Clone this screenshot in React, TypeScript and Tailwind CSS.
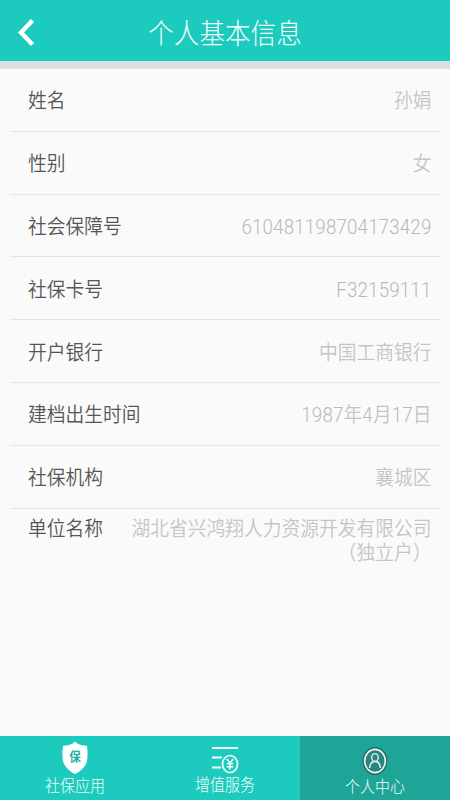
import { ReactNode } from "react";
import { clsx } from "clsx";

interface InfoRow {
  label: string;
  value: string;
}

const ROWS: InfoRow[] = [
  { label: "姓名", value: "孙娟" },
  { label: "性别", value: "女" },
  { label: "社会保障号", value: "610481198704173429" },
  { label: "社保卡号", value: "F32159111" },
  { label: "开户银行", value: "中国工商银行" },
  { label: "建档出生时间", value: "1987年4月17日" },
  { label: "社保机构", value: "襄城区" },
];

function ShieldIcon() {
  return (
    <svg width="26" height="34" viewBox="0 0 26 34" className="block">
      <path
        d="M13 .5C10.500 3.500 6 4.800 1.200 4.800C.2 9 .2 15 1 20C2.200 25.500 7 30 13 33C19 30 23.800 25.500 25 20C25.800 15 25.800 9 24.800 4.800C20 4.800 15.500 3.500 13 .5Z"
        fill="#fff"
      />
      <text
        x="13"
        y="17.800"
        transform="scale(1 1.1)"
        textAnchor="middle"
        fontSize="11.500"
        fontWeight="700"
        fill="#1cae9f"
      >
        保
      </text>
    </svg>
  );
}

function ServiceIcon() {
  return (
    <svg width="28" height="28" viewBox="0 0 28 28" fill="none" stroke="#f2fffd" className="block">
      <path d="M1 2H27" strokeWidth="2" />
      <path d="M1 11.500H11M1 21.500H10" strokeWidth="1.800" />
      <ellipse cx="19" cy="18" rx="7.500" ry="8.500" strokeWidth="1.700" />
      <path d="M15.800 13L19 17L22.200 13M19 17V23.500M15.800 17.800H22.200M15.800 20.700H22.200" strokeWidth="1.600" />
    </svg>
  );
}

function PersonIcon() {
  return (
    <svg width="26" height="30" viewBox="0 0 26 30" fill="none" className="block">
      <ellipse cx="13" cy="15" rx="11.300" ry="12.800" stroke="#2a6f69" strokeWidth="2.600" />
      <ellipse cx="13" cy="15" rx="10.300" ry="11.600" fill="#2c857c" stroke="#e6f5f3" strokeWidth="1.700" />
      <ellipse cx="13" cy="11.500" rx="3.300" ry="3.900" stroke="#dcefed" strokeWidth="1.400" />
      <path d="M7.600 22C7.800 18.500 9.500 15.500 13 15.500S18.200 18.500 18.400 22" stroke="#dcefed" strokeWidth="1.600" />
    </svg>
  );
}

// digits are set a touch wider than the Chinese glyphs beside them
function Value({ text }: { text: string }) {
  return (
    <span className="scale-y-110 font-[350] text-[#c5c5c5]">
      {text.split(/([A-Z0-9]+)/).map((part, i) =>
        i % 2 ? (
          <span key={i} className="tracking-[0.16px] text-[#b8b8b8]">
            {part}
          </span>
        ) : (
          part
        )
      )}
    </span>
  );
}

interface TabProps {
  label: string;
  icon: ReactNode;
  active?: boolean;
  className: string;
}

function Tab({ label, icon, active, className }: TabProps) {
  return (
    <button
      className={clsx(
        "flex flex-1 flex-col items-center",
        active ? "bg-[#1fa598]" : "bg-[#1ccbbd]",
        className
      )}
    >
      {icon}
      <span className="scale-y-110 pt-px text-[15px] leading-5 text-[#f0fffd]">{label}</span>
    </button>
  );
}

export default function App() {
  return (
    <div className="flex h-[800px] w-[450px] flex-col overflow-hidden bg-[#fafafa] font-[Roboto,'Noto_Sans_CJK_SC',sans-serif] font-light">
      <header className="grid h-[61px] shrink-0 grid-cols-[60px_1fr_60px] items-center bg-[#1ccbbd] pt-1">
        <button className="pl-[18px]" aria-label="返回">
          <svg width="17" height="28" viewBox="0 0 17 28" fill="none" className="block">
            <path d="M14.500 1.500L3 13.500L14.500 25.500" stroke="#fff" strokeWidth="4.400" />
          </svg>
        </button>
        <h1 className="scale-y-110 pt-0.5 text-center text-[25.6px] leading-8 text-[#f4fffe]">个人基本信息</h1>
      </header>
      <div className="h-2 shrink-0 bg-[#dcdfde]" />

      <main className="flex-1 px-[9.500px]">
        {ROWS.map((row) => (
          <div
            key={row.label}
            className="flex h-[62.8px] items-center justify-between border-b border-[#e5e5e5] pt-[3px] pr-[9px] pl-[18.500px] text-[18.75px] leading-6"
          >
            <span className="scale-y-110 font-[350] text-[#555]">{row.label}</span>
            <Value text={row.value} />
          </div>
        ))}
        <div className="flex items-start justify-between pt-[7px] pr-[9px] pl-[18.500px] text-[18.75px] leading-6">
          <span className="block scale-y-110 pt-px font-[350] text-[#555]">单位名称</span>
          <span className="text-right font-[350] text-[#c5c5c5]">
            <span className="block scale-y-110 pt-px">湖北省兴鸿翔人力资源开发有限公司</span>
            <span className="block scale-y-110">（独立户）</span>
          </span>
        </div>
      </main>

      <nav className="flex h-16 shrink-0">
        <Tab label="社保应用" icon={<ShieldIcon />} className="pt-[5px]" />
        <Tab label="增值服务" icon={<ServiceIcon />} className="pt-2.5" />
        <Tab label="个人中心" icon={<PersonIcon />} active className="pt-2.5" />
      </nav>
    </div>
  );
}
